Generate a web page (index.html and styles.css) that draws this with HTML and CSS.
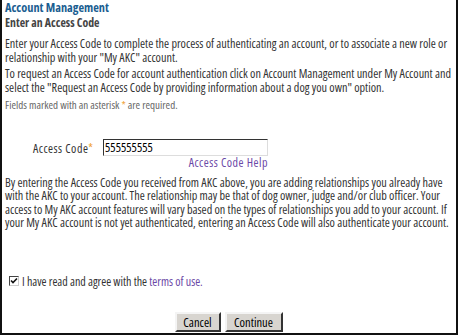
FILE: index.html
```html
<!DOCTYPE html>
<html lang="en">
<head>
    <meta charset="UTF-8">
    <title>Account Management</title>
    <link rel="stylesheet" href="styles.css">
</head>
<body>
    <div class="frame">
        <h1>Account Management</h1>
        <h2>Enter an Access Code</h2>
        <p class="first">Enter your Access Code to complete the process of authenticating an account, or to associate a new role or relationship with your "My AKC" account.</p>
        <p>To request an Access Code for account authentication click on Account Management under My Account and select the "Request an Access Code by providing information about a dog you own" option.</p>
        <p class="note">Fields marked with an asterisk <span class="req">*</span> are required.</p>

        <div class="code-row">
            <label for="accessCode">Access Code<span class="req">*</span></label>
            <div class="code-field">
                <input type="text" id="accessCode" value="555555555">
                <a href="#" class="help">Access Code Help</a>
            </div>
        </div>

        <p class="info">By entering the Access Code you received from AKC above, you are adding relationships you already have with the AKC to your account. The relationship may be that of dog owner, judge and/or club officer. Your access to My AKC account features will vary based on the types of relationships you add to your account. If your My AKC account is not yet authenticated, entering an Access Code will also authenticate your account.</p>

        <div class="agree">
            <input type="checkbox" id="agree" checked>
            <label for="agree">I have read and agree with the <a href="#">terms of use.</a></label>
        </div>

        <div class="buttons">
            <button type="button" class="cancel">Cancel</button>
            <button type="button" class="continue">Continue</button>
        </div>
    </div>
</body>
</html>
```

FILE: styles.css
```css
body {
    margin: 0;
    background: #fff;
    font-family: "Open Sans", Arial, sans-serif;
    font-stretch: condensed;
    color: #333;
}
.frame {
    width: 458px;
    height: 335px;
    border-left: 2px solid #111;
    border-right: 2px solid #111;
    border-bottom: 2px solid #111;
    padding: 0 4px 0 3px;
    box-sizing: border-box;
}
h1 {
    margin: 0;
    padding-top: 1px;
    font-size: 12.3px;
    line-height: 14px;
    color: #1b5e91;
}
h2 {
    margin: 0;
    font-size: 11.8px;
    line-height: 14px;
    color: #444;
}
p {
    margin: 3px 0 0;
    font-size: 12.2px;
    line-height: 13.5px;
}
p.first {
    margin-top: 8px;
}
p.note {
    margin-top: 4px;
    font-size: 11px;
    color: #666;
}
p.info {
    margin-top: 6.5px;
}
.req {
    color: #f0a030;
}
.code-row {
    display: flex;
    margin: 27px 0 0 28px;
    font-size: 12px;
    letter-spacing: 0.5px;
}
.code-row label {
    width: 70px;
    padding-top: 1px;
}
.code-field {
    display: flex;
    flex-direction: column;
    align-items: flex-end;
    width: 165px;
}
.code-field input {
    width: 165px;
    height: 17px;
    box-sizing: border-box;
    border: 1px solid #ddd;
    border-top-color: #333;
    border-left-color: #333;
    font-family: "Open Sans", Arial, sans-serif;
    font-stretch: condensed;
    font-size: 12.5px;
    letter-spacing: 0;
    padding: 0 1px;
    color: #000;
}
.help {
    line-height: 13.5px;
    color: #6b48a6;
    text-decoration: none;
}
.agree {
    display: flex;
    align-items: center;
    margin-top: 45px;
    font-size: 12px;
    line-height: 13.5px;
}
.agree input {
    appearance: none;
    margin: 0 3px 0 4px;
    width: 10px;
    height: 10px;
    box-sizing: border-box;
    border: 1px solid #ccc;
    border-top-color: #444;
    border-left-color: #444;
    background: #fff url("data:image/svg+xml,%3Csvg xmlns='http://www.w3.org/2000/svg' viewBox='0 0 8 8'%3E%3Cpath d='M1 3.5 L3 5.5 L7 1.5' fill='none' stroke='%23111' stroke-width='1.6'/%3E%3C/svg%3E") center / 8px 8px no-repeat;
}
.agree a {
    color: #6b48a6;
    text-decoration: none;
}
.buttons {
    display: flex;
    justify-content: center;
    gap: 4px;
    margin-top: 24px;
}
.buttons button {
    font-family: "Open Sans", Arial, sans-serif;
    font-stretch: condensed;
    font-size: 12.5px;
    height: 20px;
    padding: 0;
    background: #d8d5d0;
    border: 2px solid #f4f4f4;
    border-right-color: #333;
    border-bottom-color: #333;
    color: #000;
}
.cancel {
    width: 46px;
}
.continue {
    width: 58px;
}
```
